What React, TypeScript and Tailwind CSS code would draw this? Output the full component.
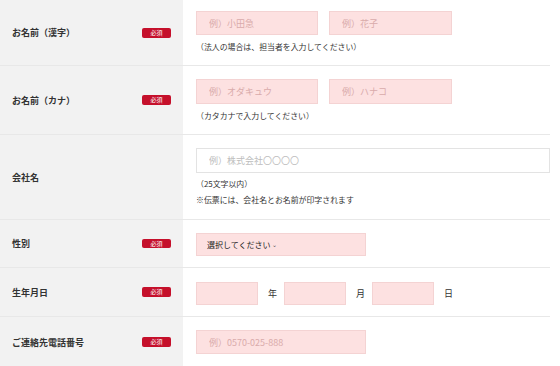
import React from "react";

const font = { fontFamily: '"Noto Sans CJK JP", "Noto Sans", sans-serif' };

function Badge({ small }: { small?: boolean }) {
  return (
    <span
      className={`flex w-[29px] items-center justify-center rounded-[2px] bg-[#c5102b] text-[6px] leading-none text-white ${
        small ? "h-[9px]" : "h-[10px]"
      }`}
    >
      必須
    </span>
  );
}

function Label({ text, required, small }: { text: string; required?: boolean; small?: boolean }) {
  return (
    <div className="flex w-[183px] shrink-0 items-center justify-between bg-[#f2f2f2] pl-[12px] pr-[12px]">
      <span className="text-[9px] font-bold leading-none text-[#333]">{text}</span>
      {required && <Badge small={small} />}
    </div>
  );
}

function PinkInput({ w, h, ph }: { w: string; h: string; ph?: string }) {
  return (
    <input
      readOnly
      placeholder={ph}
      className={`block ${w} ${h} border border-[#f4d3d3] bg-[#fde1e1] pl-[12px] text-[9px] text-[#333] outline-none placeholder:text-[#d9abab]`}
    />
  );
}

export default function App() {
  return (
    <div className="min-h-[366px] bg-white" style={font}>
      <div className="w-[550px]">
        {/* Row 1 */}
        <div className="flex border-b border-[#e8e8e8]">
          <Label text="お名前（漢字）" required />
          <div className="flex-1 pl-[13px] pt-[11px] pb-[12px]">
            <div className="flex gap-[11px]">
              <PinkInput w="w-[122px]" h="h-[24px]" ph="例）小田急" />
              <PinkInput w="w-[123px]" h="h-[24px]" ph="例）花子" />
            </div>
            <p className="mt-[6px] text-[7.9px] leading-[12px] text-[#333]">（法人の場合は、担当者を入力してください）</p>
          </div>
        </div>

        {/* Row 2 */}
        <div className="flex border-b border-[#e8e8e8]">
          <Label text="お名前（カナ）" required />
          <div className="flex-1 pl-[13px] pt-[13px] pb-[12px]">
            <div className="flex gap-[11px]">
              <PinkInput w="w-[122px]" h="h-[25px]" ph="例）オダキュウ" />
              <PinkInput w="w-[123px]" h="h-[25px]" ph="例）ハナコ" />
            </div>
            <p className="mt-[6px] text-[7.9px] leading-[12px] text-[#333]">（カタカナで入力してください）</p>
          </div>
        </div>

        {/* Row 3 */}
        <div className="flex border-b border-[#e8e8e8]">
          <Label text="会社名" />
          <div className="flex-1 pl-[13px] pt-[13px] pb-[13px]">
            <input
              readOnly
              placeholder="例）株式会社〇〇〇〇"
              className="block h-[25px] w-full border border-[#e3e3e3] bg-white pl-[12px] text-[9px] text-[#333] outline-none placeholder:text-[#bdbdbd]"
            />
            <p className="mt-[5px] text-[7.9px] leading-[12px] text-[#333]">（25文字以内）</p>
            <p className="mt-[4px] text-[7.9px] leading-[12px] text-[#333]">※伝票には、会社名とお名前が印字されます</p>
          </div>
        </div>

        {/* Row 4 */}
        <div className="flex border-b border-[#e8e8e8]">
          <Label text="性別" required small />
          <div className="flex-1 pl-[13px] pt-[13px] pb-[11px]">
            <div className="flex h-[23px] w-[170px] items-center border border-[#f4d3d3] bg-[#fde1e1] pl-[10px] text-[8px] text-[#222]">
              <span>選択してください</span>
              <span className="ml-[1px] text-[6px] leading-none text-[#555]">⌄</span>
            </div>
          </div>
        </div>

        {/* Row 5 */}
        <div className="flex border-b border-[#e8e8e8]">
          <Label text="生年月日" required />
          <div className="flex-1 pl-[13px] pt-[14px] pb-[11px]">
            <div className="flex items-center text-[9px] text-[#333]">
              <PinkInput w="w-[62px]" h="h-[23px]" />
              <span className="ml-[10px] mr-[7px] w-[9px] text-center">年</span>
              <PinkInput w="w-[62px]" h="h-[23px]" />
              <span className="ml-[10px] mr-[7px] w-[9px] text-center">月</span>
              <PinkInput w="w-[62px]" h="h-[23px]" />
              <span className="ml-[10px] w-[9px] text-center">日</span>
            </div>
          </div>
        </div>

        {/* Row 6 */}
        <div className="flex">
          <Label text="ご連絡先電話番号" required />
          <div className="flex-1 pl-[13px] pt-[13px] pb-[13px]">
            <PinkInput w="w-[170px]" h="h-[24px]" ph="例）0570-025-888" />
          </div>
        </div>
      </div>
    </div>
  );
}
